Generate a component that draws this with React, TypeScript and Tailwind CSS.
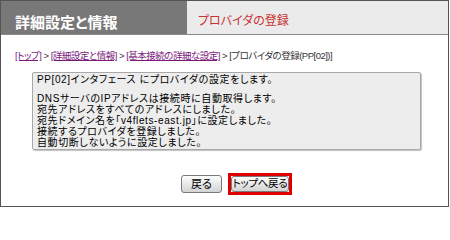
import React from "react";

const jp = "font-['Noto_Sans_CJK_JP','Noto_Sans',sans-serif] [font-feature-settings:'palt']";
const mix = "font-['Liberation_Sans','Noto_Sans_CJK_JP',sans-serif] [font-feature-settings:'palt']";

export default function App() {
  return (
    <div className={`w-[450px] h-[208px] bg-white ${jp}`}>
      <div className="w-[449px] h-[207px] border border-[#555] flex flex-col bg-white">
        <div className="h-[34px] flex border-b border-[#8a8a8a] shrink-0">
          <div className="w-[186px] bg-[#787878] text-white font-bold text-[15px] leading-none pl-[14px] pt-[13px]">
            詳細設定と情報
          </div>
          <div className="flex-1 bg-[#ebebeb] text-[#c83232] text-[12px] leading-none pl-[11px] pt-[13px]">
            プロバイダの登録
          </div>
        </div>
        <div className={`text-[9.5px] leading-none pl-[14px] pt-[16px] text-[#333] whitespace-nowrap tracking-[-0.5px] ${mix}`}>
          <span className="text-[#7a1a7a] underline">[トップ]</span>
          <span> &gt; </span>
          <span className="text-[#7a1a7a] underline">[詳細設定と情報]</span>
          <span> &gt; </span>
          <span className="text-[#7a1a7a] underline">[基本接続の詳細な設定]</span>
          <span> &gt; </span>
          <span>[プロバイダの登録(PP[02])]</span>
        </div>
        <div className={`ml-[31px] mt-[11px] w-[389px] h-[78px] bg-[#ededed] border border-[#a8a8a8] rounded-[2px] shadow-[1px_1px_1px_rgba(0,0,0,0.25)] pl-[4px] pt-[1px] text-[10px] text-black tracking-[0.6px] whitespace-nowrap ${mix}`}>
          <div className="leading-[11px]">PP[02]インタフェース にプロバイダの設定をします。</div>
          <div className="leading-[11px] mt-[8px]">
            <div>DNSサーバのIPアドレスは接続時に自動取得します。</div>
            <div>宛先アドレスをすべてのアドレスにしました。</div>
            <div>宛先ドメイン名を「v4flets-east.jp」に設定しました。</div>
            <div>接続するプロバイダを登録しました。</div>
            <div>自動切断しないように設定しました。</div>
          </div>
        </div>
        <div className="flex items-center ml-[180px] mt-[23px] gap-[6px]">
          <button className="w-[41px] h-[18px] rounded-[3px] border border-[#7a7a7a] bg-gradient-to-b from-[#fdfdfd] to-[#d4d4d4] text-[11px] leading-none text-black whitespace-nowrap">
            戻る
          </button>
          <div className="border-[3px] border-[#e00000]">
            <button className="w-[58px] h-[16px] rounded-[3px] border border-[#7a7a7a] bg-gradient-to-b from-[#fdfdfd] to-[#d4d4d4] text-[10.5px] leading-none text-black block whitespace-nowrap tracking-[-0.3px]">
              トップへ戻る
            </button>
          </div>
        </div>
      </div>
    </div>
  );
}
